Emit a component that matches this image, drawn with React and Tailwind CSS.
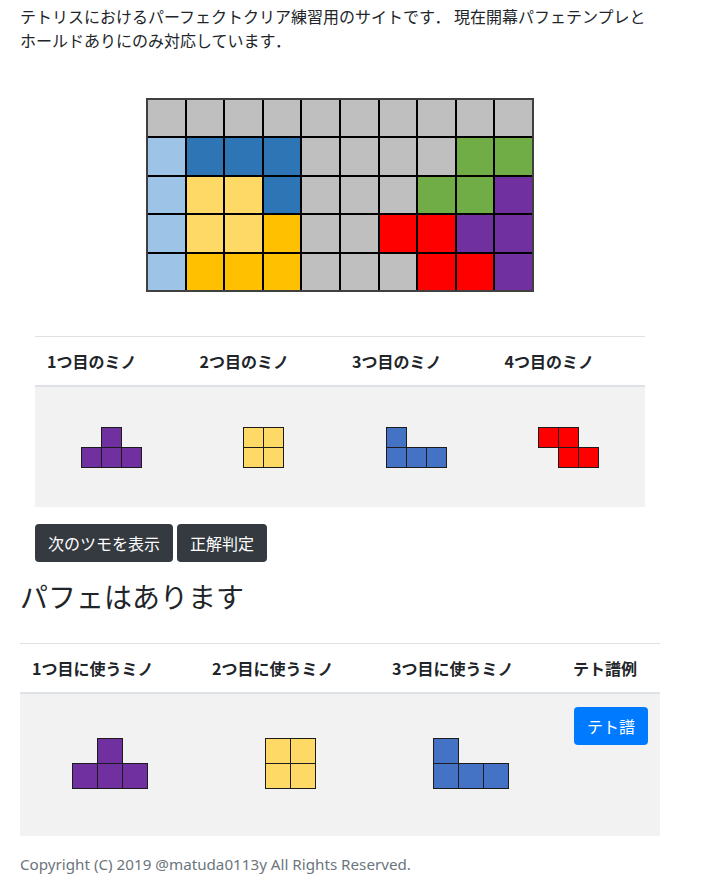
import React from "react";

const CELL = {
  g: "bg-[#bfbfbf]",
  lb: "bg-[#9dc3e6]",
  db: "bg-[#2e75b6]",
  ly: "bg-[#ffd966]",
  oy: "bg-[#ffc000]",
  gr: "bg-[#70ad47]",
  p: "bg-[#7030a0]",
  r: "bg-[#ff0000]",
};

const FIELD = [
  ["g", "g", "g", "g", "g", "g", "g", "g", "g", "g"],
  ["lb", "db", "db", "db", "g", "g", "g", "g", "gr", "gr"],
  ["lb", "ly", "ly", "db", "g", "g", "g", "gr", "gr", "p"],
  ["lb", "ly", "ly", "oy", "g", "g", "r", "r", "p", "p"],
  ["lb", "oy", "oy", "oy", "g", "g", "g", "r", "r", "p"],
];

const SHAPES = {
  T: { cells: [[1, 0], [0, 1], [1, 1], [2, 1]], w: 3, h: 2, color: "#7030a0" },
  O: { cells: [[0, 0], [1, 0], [0, 1], [1, 1]], w: 2, h: 2, color: "#ffd966" },
  J: { cells: [[0, 0], [0, 1], [1, 1], [2, 1]], w: 3, h: 2, color: "#4472c4" },
  Z: { cells: [[0, 0], [1, 0], [1, 1], [2, 1]], w: 3, h: 2, color: "#ff0000" },
};

function Piece({ type, size }) {
  const s = SHAPES[type];
  return (
    <svg width={s.w * size + 1} height={s.h * size + 1} className="block">
      {s.cells.map(([x, y], i) => (
        <rect
          key={i}
          x={x * size + 0.5}
          y={y * size + 0.5}
          width={size}
          height={size}
          fill={s.color}
          stroke="#1c1c1c"
          strokeWidth="1"
        />
      ))}
    </svg>
  );
}

export default function App() {
  return (
    <div className="min-h-screen bg-white">
      <div className="w-[640px] ml-[20px] text-[#212529] font-['Noto_Sans_CJK_JP',sans-serif]">
        <p className="pt-[4px] text-[16px] leading-6">
          テトリスにおけるパーフェクトクリア練習用のサイトです． 現在開幕パフェテンプレとホールドありにのみ対応しています．
        </p>

        <div className="flex justify-center mt-[46px]">
          <div className="w-[388px] h-[194px] border-2 border-[#404040] bg-black grid grid-cols-10 grid-rows-5 gap-[2px]">
            {FIELD.flat().map((c, i) => (
              <div key={i} className={CELL[c]} />
            ))}
          </div>
        </div>

        <div className="w-[610px] mx-auto mt-[44px]">
          <div className="border-t border-[#dee2e6] border-b-2 grid grid-cols-4 h-[51px] items-center font-bold text-[16px]">
            <div className="px-3">1つ目のミノ</div>
            <div className="px-3">2つ目のミノ</div>
            <div className="px-3">3つ目のミノ</div>
            <div className="px-3">4つ目のミノ</div>
          </div>
          <div className="grid grid-cols-4 h-[120px] bg-[#f2f2f2] items-center justify-items-center">
            <Piece type="T" size={20} />
            <Piece type="O" size={20} />
            <Piece type="J" size={20} />
            <Piece type="Z" size={20} />
          </div>
          <div className="flex gap-1 mt-[17px]">
            <button className="bg-[#343a40] text-white text-[16px] leading-6 px-[13px] h-[38px] rounded">
              次のツモを表示
            </button>
            <button className="bg-[#343a40] text-white text-[16px] leading-6 px-[13px] h-[38px] rounded">
              正解判定
            </button>
          </div>
        </div>

        <h3 className="mt-[17px] text-[28px] leading-[34px] font-normal">パフェはあります</h3>

        <div className="mt-[30px]">
          <div className="border-t border-[#dee2e6] border-b-2 grid grid-cols-[180px_180px_181px_99px] h-[51px] items-center font-bold text-[16px]">
            <div className="px-3">1つ目に使うミノ</div>
            <div className="px-3">2つ目に使うミノ</div>
            <div className="px-3">3つ目に使うミノ</div>
            <div className="px-3">テト譜例</div>
          </div>
          <div className="grid grid-cols-[180px_180px_181px_99px] h-[142px] bg-[#f2f2f2]">
            <div className="flex items-center justify-center pb-[4px]">
              <Piece type="T" size={25} />
            </div>
            <div className="flex items-center justify-center pb-[4px]">
              <Piece type="O" size={25} />
            </div>
            <div className="flex items-center justify-center pb-[4px]">
              <Piece type="J" size={25} />
            </div>
            <div className="pt-[13px] pl-[13px]">
              <button className="bg-[#007bff] text-white text-[16px] leading-6 px-[13px] h-[38px] rounded">
                テト譜
              </button>
            </div>
          </div>
        </div>

        <p className="mt-[16px] text-[15.2px] leading-6 text-[#6c757d] font-['Noto_Sans',sans-serif]">
          Copyright (C) 2019 @matuda0113y All Rights Reserved.
        </p>
      </div>
    </div>
  );
}
